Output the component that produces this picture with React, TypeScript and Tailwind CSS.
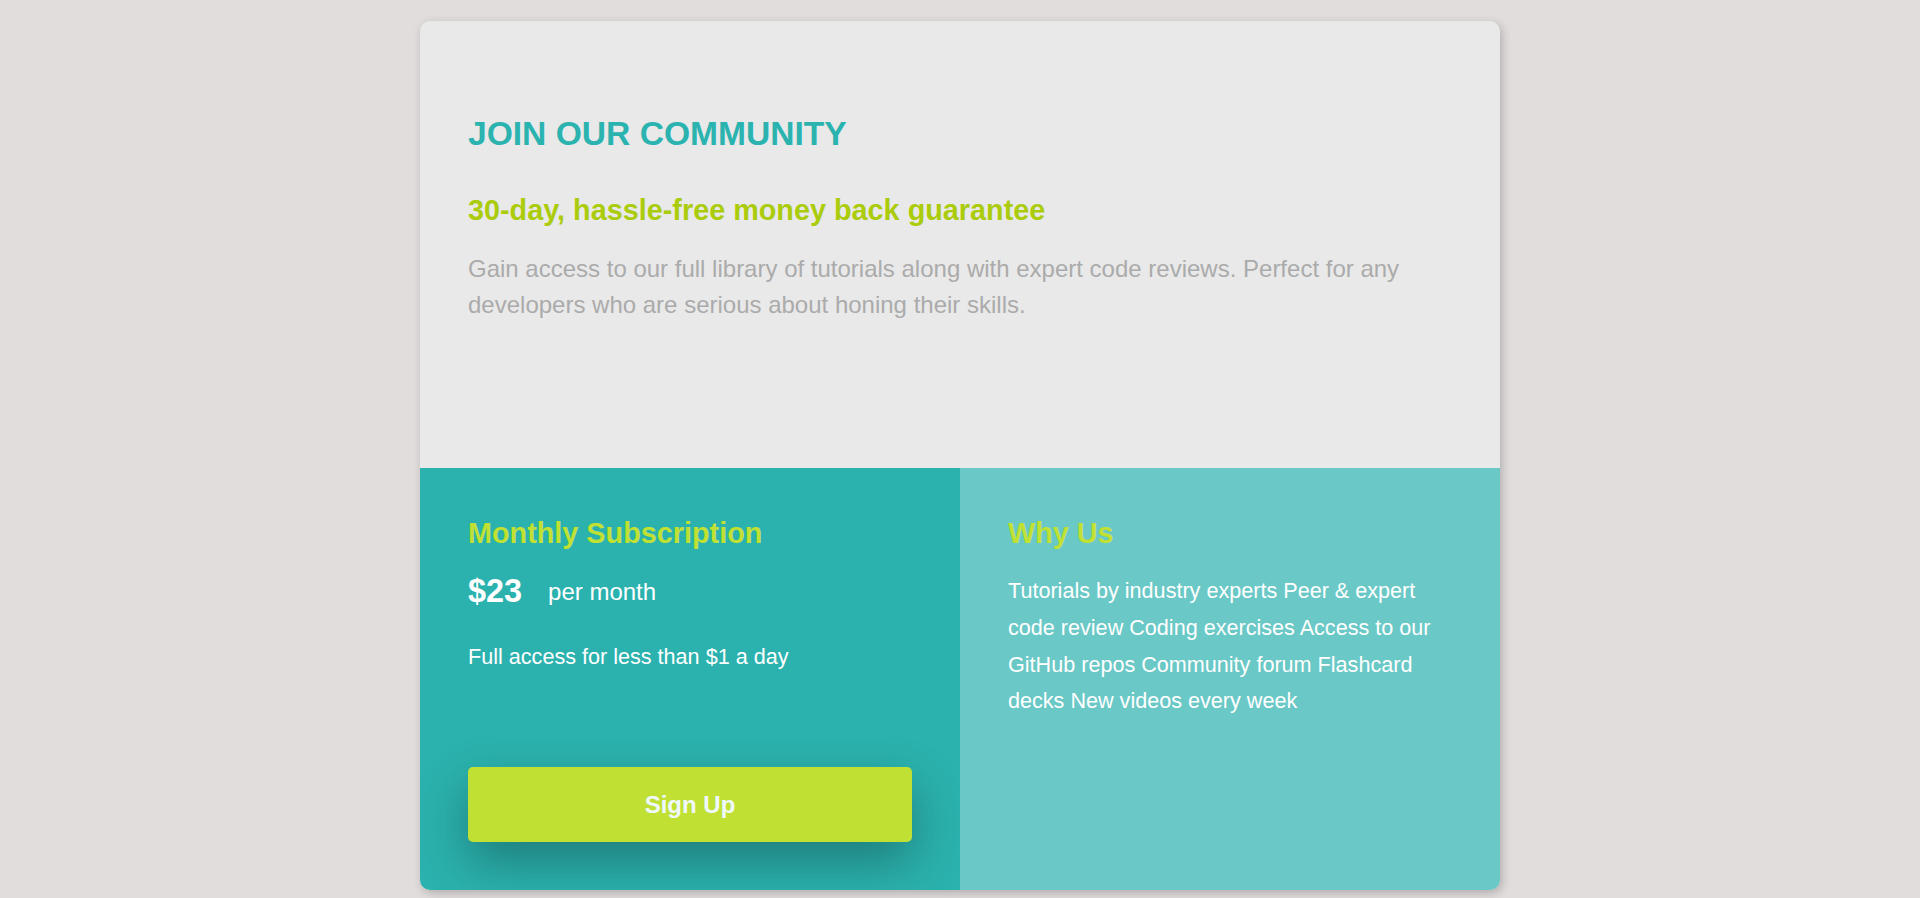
import React from "react";

const features = [
  "Tutorials by industry experts",
  "Peer & expert code review",
  "Coding exercises",
  "Access to our GitHub repos",
  "Community forum",
  "Flashcard decks",
  "New videos every week",
];

const App = () => {
  return (
    <div
      className="min-h-screen bg-[#e1dddc] pt-[21px] pb-[8px]"
      style={{ fontFamily: '"Liberation Sans", Arial, sans-serif' }}
    >
      <div className="mx-auto w-[1080px] overflow-hidden rounded-[10px] bg-[#e9e9e9] shadow-[2px_3px_10px_rgba(0,0,0,0.22)]">
        {/* top */}
        <div className="px-[48px] pt-[94px] pb-[144.7px]">
          <h1 className="text-[33.6px] font-bold leading-[1.149] text-[#2bb3b0]">
            JOIN OUR COMMUNITY
          </h1>
          <h2 className="mt-[40px] text-[28.8px] font-bold leading-[1.149] text-[#abcc0c]">
            30-day, hassle-free money back guarantee
          </h2>
          <p className="mt-[24.4px] text-[24px] leading-[36px] text-[#ababab]">
            Gain access to our full library of tutorials along with expert code
            reviews. Perfect for any developers who are serious about honing
            their skills.
          </p>
        </div>

        {/* bottom */}
        <div className="grid grid-cols-2">
          <div className="flex flex-col bg-[#2bb2ae] px-[48px] pt-[49.5px] pb-[48px]">
            <h3 className="text-[28.8px] font-bold leading-[1.149] text-[#c0e134]">
              Monthly Subscription
            </h3>
            <div className="mt-[23px] flex items-center text-white">
              <span className="text-[32.4px] font-bold leading-[1.149]">$23</span>
              <span className="ml-[26px] text-[24px] leading-[1.149]">per month</span>
            </div>
            <p className="mt-[34px] text-[21.6px] leading-[1.149] text-white">
              Full access for less than $1 a day
            </p>
            <button className="mt-[98px] h-[75px] w-full rounded-[5px] bg-[#c0e134] text-[24px] font-bold text-[#f0f8ff] shadow-[0_20px_50px_rgba(0,0,0,0.3)]">
              Sign Up
            </button>
          </div>

          <div className="bg-[#6ac8c6] px-[48px] pt-[49.5px] pb-[48px]">
            <h3 className="text-[28.8px] font-bold leading-[1.149] text-[#c0e134]">
              Why Us
            </h3>
            <p className="mt-[23px] text-[21.6px] leading-[36.7px] text-white">
              {features.join(" ")}
            </p>
          </div>
        </div>
      </div>
    </div>
  );
};

export default App;
